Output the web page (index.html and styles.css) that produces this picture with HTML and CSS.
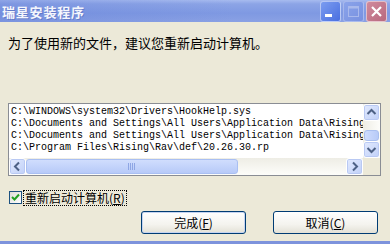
FILE: index.html
```html
<!DOCTYPE html>
<html lang="zh-CN">
<head>
  <meta charset="UTF-8" />
  <title>瑞星安装程序</title>
  <link rel="stylesheet" href="styles.css">
</head>
<body>
<div class="window">
  <div class="titlebar">
    <span class="title">瑞星安装程序</span>
    <div class="caption-buttons">
      <span class="cap cap-min"><svg width="19" height="19" viewBox="0 0 19 19"><rect x="4" y="12" width="7" height="3" fill="#fff"/></svg></span>
      <span class="cap cap-max"><svg width="19" height="19" viewBox="0 0 19 19"><rect x="4.5" y="4.5" width="10" height="10" fill="none" stroke="#a9b9ec" stroke-width="1"/><rect x="4.5" y="4.5" width="10" height="2" fill="#a9b9ec"/></svg></span>
      <span class="cap cap-close"><svg width="19" height="19" viewBox="0 0 19 19"><path d="M5 5 L14 14 M14 5 L5 14" stroke="#fff" stroke-width="2.2"/></svg></span>
    </div>
  </div>

  <div class="content">
    <p class="message">为了使用新的文件，建议您重新启动计算机。</p>

    <div class="listbox">
      <div class="list-lines">
        <div class="line">C:\WINDOWS\system32\Drivers\HookHelp.sys</div>
        <div class="line">C:\Documents and Settings\All Users\Application Data\Rising\Rav\setup.dat</div>
        <div class="line">C:\Documents and Settings\All Users\Application Data\Rising\Rav\update.dat</div>
        <div class="line">C:\Program Files\Rising\Rav\def\20.26.30.rp</div>
      </div>
      <div class="vscroll">
        <span class="sb-btn"><svg width="15" height="15" viewBox="0 0 15 15"><polyline points="3.5,9 7.5,5 11.5,9" fill="none" stroke="#4d6185" stroke-width="2"/></svg></span>
        <div class="v-track"><span class="v-thumb"></span></div>
        <span class="sb-btn"><svg width="15" height="15" viewBox="0 0 15 15"><polyline points="3.5,6 7.5,10 11.5,6" fill="none" stroke="#4d6185" stroke-width="2"/></svg></span>
      </div>
      <div class="hscroll">
        <span class="sb-btn"><svg width="15" height="15" viewBox="0 0 15 15"><polyline points="9,3.5 5,7.5 9,11.5" fill="none" stroke="#4d6185" stroke-width="2"/></svg></span>
        <div class="h-track">
          <span class="h-thumb"><svg width="8" height="7" viewBox="0 0 8 7"><path d="M0.5 0 V7 M2.5 0 V7 M4.5 0 V7 M6.5 0 V7" stroke="#8ea6e4" stroke-width="1"/></svg></span>
        </div>
        <span class="sb-btn"><svg width="15" height="15" viewBox="0 0 15 15"><polyline points="6,3.5 10,7.5 6,11.5" fill="none" stroke="#4d6185" stroke-width="2"/></svg></span>
      </div>
      <div class="corner"></div>
    </div>

    <label class="check-row">
      <span class="checkbox"><svg width="11" height="11" viewBox="0 0 11 11"><path d="M2 5 L4.5 7.5 L9 2.5" fill="none" stroke="#21a121" stroke-width="2"/></svg></span>
      <span class="check-label">重新启动计算机(<u>R</u>)</span>
    </label>

    <div class="actions">
      <button class="btn btn-default">完成(<u>F</u>)</button>
      <button class="btn">取消(<u>C</u>)</button>
    </div>
  </div>
</div>
</body>
</html>
```

FILE: styles.css
```css
html, body {
  margin: 0;
  padding: 0;
  background: #ece9d8;
}

.window {
  width: 390px;
  height: 244px;
  display: flex;
  flex-direction: column;
  background: #ece9d8;
  border-bottom: 3px solid #7d93dc;
  box-sizing: border-box;
  font-family: "Noto Sans CJK SC", sans-serif;
  color: #000;
}

/* title bar */
.titlebar {
  height: 22px;
  flex-shrink: 0;
  display: flex;
  align-items: center;
  justify-content: space-between;
  background:
    linear-gradient(90deg, rgba(96, 124, 214, 0.35), rgba(255, 255, 255, 0) 60%),
    linear-gradient(#a7bbef 0%, #8ca4e6 18%, #7f99e2 60%, #8aa1e4 100%);
}

.title {
  padding-left: 2px;
  font-size: 13px;
  font-weight: bold;
  color: #f4f6fd;
  text-shadow: 1px 1px 0 rgba(60, 80, 160, 0.35);
  letter-spacing: 0.8px;
}

.caption-buttons {
  display: flex;
  gap: 2px;
  padding-right: 3px;
}

.cap {
  width: 19px;
  height: 19px;
  border: 1px solid rgba(255, 255, 255, 0.55);
  border-radius: 3px;
  display: flex;
}

.cap-min {
  background: linear-gradient(135deg, #7b9cf0, #4a6fe0);
}

.cap-max {
  background: linear-gradient(135deg, #8aa3ea, #7891e0);
  border-color: rgba(255, 255, 255, 0.3);
}

.cap-close {
  background: linear-gradient(135deg, #d08a9c, #b8697f);
}

/* content */
.content {
  flex: 1;
  display: flex;
  flex-direction: column;
}

.message {
  margin: 13px 0 0 8px;
  font-size: 13px;
  line-height: 16px;
}

.listbox {
  margin: 52px 0 0 8px;
  width: 373px;
  height: 73px;
  flex-shrink: 0;
  box-sizing: border-box;
  border: 1px solid #8a8d94;
  background: #fff;
  display: grid;
  grid-template-columns: 354px 17px;
  grid-template-rows: 54px 17px;
}

.list-lines {
  padding: 2px 0 0 2px;
  overflow: hidden;
  font-family: "Liberation Mono", monospace;
  font-size: 10px;
  line-height: 12px;
}

.line {
  white-space: pre;
}

/* scroll bars */
.vscroll {
  display: flex;
  flex-direction: column;
  background: linear-gradient(90deg, #eeede5, #fdfdfa);
}

.hscroll {
  display: flex;
  background: linear-gradient(#eeede5, #fdfdfa);
}

.sb-btn {
  width: 17px;
  height: 17px;
  flex-shrink: 0;
  box-sizing: border-box;
  border: 1px solid #fff;
  border-radius: 3px;
  background: linear-gradient(135deg, #e2eafe, #c0d0f8);
  box-shadow: inset 0 0 0 1px #b9c9f3;
  display: flex;
  align-items: center;
  justify-content: center;
}

.v-track {
  flex: 1;
  display: flex;
  flex-direction: column;
  justify-content: flex-end;
}

.v-thumb {
  height: 9px;
  margin: 0 1px;
  border-radius: 3px;
  background: linear-gradient(90deg, #cfdcfd, #b8cbf8);
  border: 1px solid #a9bfef;
}

.h-track {
  flex: 1;
  display: flex;
}

.h-thumb {
  width: 212px;
  margin: 1px 0;
  box-sizing: border-box;
  border: 1px solid #a9bff2;
  border-radius: 3px;
  background: linear-gradient(#d0ddfd, #b7caf8);
  display: flex;
  align-items: center;
  justify-content: center;
}

.corner {
  background: #ece9d8;
}

/* checkbox */
.check-row {
  margin: 14px 0 0 9px;
  height: 15px;
  flex-shrink: 0;
  display: flex;
  align-items: center;
  gap: 2px;
}

.checkbox {
  width: 13px;
  height: 13px;
  box-sizing: border-box;
  border: 1px solid #1c5180;
  background: linear-gradient(135deg, #dcdcd6, #fff);
  display: flex;
}

.check-label {
  font-size: 12px;
  line-height: 14px;
  outline: 1px dotted #000;
  padding: 0 1px;
}

/* buttons */
.actions {
  margin-top: 6px;
  padding-right: 12px;
  display: flex;
  justify-content: flex-end;
  gap: 27px;
}

.btn {
  width: 105px;
  height: 23px;
  padding: 0;
  border: 1px solid #003c74;
  border-radius: 3px;
  background: linear-gradient(#fff 0%, #f4f3ee 60%, #e3e1d6 100%);
  font-family: "Noto Sans CJK SC", sans-serif;
  font-size: 12px;
  line-height: 21px;
  color: #000;
}

.btn-default {
  box-shadow: inset 0 0 0 1px #c6d4f0;
}

.btn u, .check-label u {
  text-decoration: underline;
}
```
